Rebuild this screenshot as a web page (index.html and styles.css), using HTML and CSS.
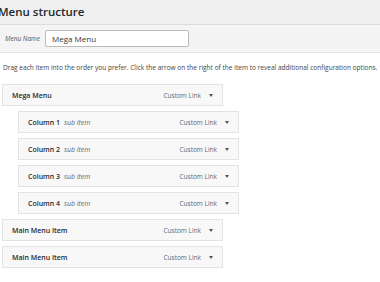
FILE: index.html
```html
<!DOCTYPE html>
<html lang="en">
<head>
  <meta charset="UTF-8">
  <meta name="viewport" content="width=device-width, initial-scale=1.0">
  <title>Menu structure</title>
  <link rel="stylesheet" href="styles.css">
</head>
<body>
  <header>
    <h2>Menu structure</h2>
  </header>
  <div class="menu-name">
    <label for="menu-name">Menu Name</label>
    <input type="text" id="menu-name" value="Mega Menu">
  </div>
  <main>
    <p class="hint">Drag each item into the order you prefer. Click the arrow on the right of the item to reveal additional configuration options.</p>
    <ul class="menu">
      <li class="item">
        <span class="title">Mega Menu</span>
        <span class="type">Custom Link</span>
        <span class="arrow"></span>
      </li>
      <li class="item sub">
        <span class="title">Column 1 <em>sub item</em></span>
        <span class="type">Custom Link</span>
        <span class="arrow"></span>
      </li>
      <li class="item sub">
        <span class="title">Column 2 <em>sub item</em></span>
        <span class="type">Custom Link</span>
        <span class="arrow"></span>
      </li>
      <li class="item sub">
        <span class="title">Column 3 <em>sub item</em></span>
        <span class="type">Custom Link</span>
        <span class="arrow"></span>
      </li>
      <li class="item sub">
        <span class="title">Column 4 <em>sub item</em></span>
        <span class="type">Custom Link</span>
        <span class="arrow"></span>
      </li>
      <li class="item">
        <span class="title">Main Menu Item</span>
        <span class="type">Custom Link</span>
        <span class="arrow"></span>
      </li>
      <li class="item">
        <span class="title">Main Menu Item</span>
        <span class="type">Custom Link</span>
        <span class="arrow"></span>
      </li>
    </ul>
  </main>
</body>
</html>
```

FILE: styles.css
```css
body {
  font-family: "Open Sans", sans-serif;
  margin: 0;
  padding: 0;
  color: #23282d;
  background-color: white;
  overflow: hidden;
}
header {
  background-color: #f0f0f0;
  height: 25px;
  border-bottom: 1px solid #dcdcdc;
  box-sizing: border-box;
}
header h2 {
  margin: 0 0 0 -2px;
  font-size: 11.5px;
  font-weight: 600;
  line-height: 24px;
}
.menu-name {
  background-color: #f4f4f4;
  height: 28px;
  border-bottom: 1px solid #e2e2e2;
  box-sizing: border-box;
  display: flex;
  align-items: center;
  padding-left: 5px;
  gap: 5px;
}
.menu-name label {
  font-size: 6.5px;
  font-style: italic;
  color: #555;
}
.menu-name input {
  width: 144px;
  height: 17px;
  box-sizing: border-box;
  border: 1px solid #bbb;
  border-radius: 2px;
  padding: 0 6px;
  font-family: inherit;
  font-size: 8px;
  color: #32373c;
}
main {
  padding: 0 2px;
}
.hint {
  margin: 10px 0 0 1px;
  font-size: 6.55px;
  color: #444;
  white-space: nowrap;
}
.menu {
  list-style: none;
  margin: 12px 0 0;
  padding: 0;
  display: flex;
  flex-direction: column;
  gap: 5px;
}
.item {
  width: 221px;
  height: 22px;
  box-sizing: border-box;
  border: 1px solid #e3e3e3;
  background-color: #f8f8f8;
  display: flex;
  align-items: center;
  padding: 0 9px;
  font-size: 7px;
}
.item.sub {
  margin-left: 16px;
}
.title {
  flex: 1;
  font-weight: 600;
  color: #23282d;
}
.title em {
  font-weight: normal;
  color: #666;
  margin-left: 2px;
}
.type {
  color: #666;
  font-size: 6.5px;
}
.arrow {
  width: 0;
  height: 0;
  margin-left: 8px;
  border-left: 2.5px solid transparent;
  border-right: 2.5px solid transparent;
  border-top: 3px solid #555;
}
```
